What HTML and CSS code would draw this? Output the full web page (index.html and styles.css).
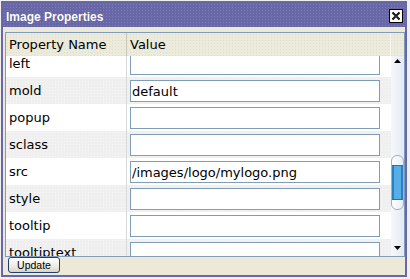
FILE: index.html
```html
<!DOCTYPE html>
<html lang="en">
<head>
    <meta charset="UTF-8">
    <title>Image Properties</title>
    <link rel="stylesheet" href="styles.css">
</head>
<body>

<div class="window">
    <div class="titlebar">
        <span class="title">Image Properties</span>
        <span class="close">
            <svg width="14" height="14" viewBox="0 0 14 14">
                <rect x="0.5" y="0.5" width="13" height="13" fill="#fff" stroke="#000"/>
                <path d="M3.5 3.5 L10.5 10.5 M10.5 3.5 L3.5 10.5" stroke="#000" stroke-width="2"/>
                <path d="M4 4.5 L10 10.5 M10 4.5 L4 10.5" stroke="#5a5a5a" stroke-width="0.8"/>
            </svg>
        </span>
    </div>

    <div class="content">
        <div class="grid">
            <div class="head">
                <div class="hcell hname">Property Name</div>
                <div class="hcell hvalue">Value</div>
                <div class="hscroll"></div>
            </div>
            <div class="body">
                <div class="rows">
                    <div class="row"><div class="name">left</div><div class="val"><input type="text" value=""></div></div>
                    <div class="row alt"><div class="name">mold</div><div class="val"><input type="text" value="default"></div></div>
                    <div class="row"><div class="name">popup</div><div class="val"><input type="text" value=""></div></div>
                    <div class="row alt"><div class="name">sclass</div><div class="val"><input type="text" value=""></div></div>
                    <div class="row"><div class="name">src</div><div class="val"><input type="text" value="/images/logo/mylogo.png"></div></div>
                    <div class="row alt"><div class="name">style</div><div class="val"><input type="text" value=""></div></div>
                    <div class="row"><div class="name">tooltip</div><div class="val"><input type="text" value=""></div></div>
                    <div class="row alt"><div class="name">tooltiptext</div><div class="val"><input type="text" value=""></div></div>
                </div>
                <div class="scrollbar">
                    <div class="arrow up">
                        <svg width="7" height="4" viewBox="0 0 7 4"><path d="M3.5 0 L7 4 L0 4 Z" fill="#000"/></svg>
                    </div>
                    <div class="track">
                        <div class="thumb"><div class="thumb-mid"></div></div>
                    </div>
                    <div class="arrow">
                        <svg width="7" height="4" viewBox="0 0 7 4"><path d="M0 0 L7 0 L3.5 4 Z" fill="#000"/></svg>
                    </div>
                </div>
            </div>
        </div>

        <div class="footer">
            <button class="btn">Update</button>
        </div>
    </div>
</div>

</body>
</html>
```

FILE: styles.css
```css
body { margin: 0; background: #f0f0f0; font-family: "DejaVu Sans", Verdana, sans-serif; }
.window { margin: 1px 0 0 1px; width: 402px; height: 272px; border: 2px solid #6868a8; background: #ece9d8; display: flex; flex-direction: column; }

.titlebar { height: 24px; display: flex; justify-content: space-between; background-color: #6868a8; background-image: radial-gradient(circle, rgba(255,255,255,0.14) 0.7px, transparent 0.9px); background-size: 3px 3px; }
.title { font-family: "Liberation Sans", Arial, sans-serif; font-weight: bold; font-size: 12px; color: #fff; padding: 4px 0 0 3px; line-height: 21px; text-shadow: 0 0 1px rgba(0,0,0,0.3); }
.close { margin: 6px 2px 0 0; width: 14px; height: 14px; }
.close svg { display: block; }

.content { flex: 1; display: flex; flex-direction: column; padding: 5px 0 0 2px; }
.grid { border: 1px solid #7f9db9; background: #fff; }

.head { display: flex; height: 23px; background-color: #ebeadb; background-image: radial-gradient(circle, rgba(0,0,0,0.05) 0.7px, transparent 0.9px); background-size: 3px 3px; }
.hcell { font-size: 13px; line-height: 23px; color: #000; padding-left: 3px; box-sizing: border-box; }
.hname { width: 121px; border-right: 1px solid #c9c7ba; }
.hvalue { width: 264px; border-right: 1px solid #f6f5ee; }
.hscroll { width: 13px; }

.body { display: flex; height: 200px; }
.rows { width: 385px; overflow: hidden; }
.rows .row:first-child { margin-top: -6px; }
.row { display: flex; height: 27px; background: #fff; }
.row.alt { background-color: #efefef; background-image: radial-gradient(circle, rgba(255,255,255,0.5) 0.7px, transparent 0.9px); background-size: 3px 3px; }
.name { width: 121px; box-sizing: border-box; border-right: 1px solid #d8d8d8; padding: 1px 0 0 3px; font-size: 13px; line-height: 26px; color: #000; }
.val { flex: 1; }
.val input { display: block; box-sizing: border-box; width: 250px; height: 22px; margin: 3px 0 0 3px; border: 1px solid #7f9db9; padding: 0 1px; font-family: "DejaVu Sans", Verdana, sans-serif; font-size: 13px; color: #000; background: #fff; outline: none; }

.scrollbar { width: 13px; display: flex; flex-direction: column; background: linear-gradient(to right, #f6f8fc, #e4e9f3); }
.arrow { height: 16px; display: flex; align-items: center; justify-content: center; }
.arrow.up { align-items: flex-start; padding-top: 3px; height: 13px; }
.arrow svg { display: block; }
.track { flex: 1; padding-top: 83px; }
.thumb { height: 55px; box-sizing: border-box; border: 1px solid #9ab0cf; border-radius: 6px; background: linear-gradient(to right, #ffffff, #e8edf6); padding: 9px 0; }
.thumb-mid { height: 100%; background: linear-gradient(to right, #2d7fc4 0, #2d7fc4 2px, #56aee8 2px, #56aee8 9px, #2d7fc4 9px); border-top: 1px solid #2d6fa8; border-bottom: 1px solid #2d6fa8; box-sizing: border-box; }

.footer { height: 18px; padding-left: 3px; }
.btn { display: block; height: 16px; width: 52px; margin-top: 0; padding: 0; border: 1px solid #1f3f6e; border-radius: 3px; background: linear-gradient(#ffffff, #e9e6dc 70%, #d8d3c6); font-family: "Liberation Sans", Arial, sans-serif; font-size: 10.5px; color: #000; line-height: 14px; }
```
